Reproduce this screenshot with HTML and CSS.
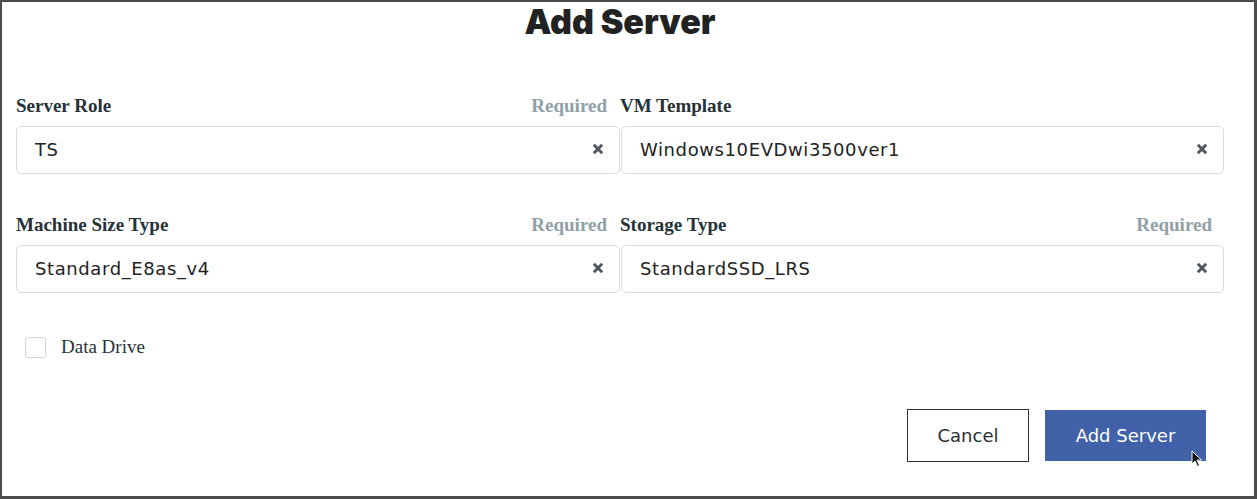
FILE: index.html
```html
<!DOCTYPE html>
<html>
<head>
<meta charset="utf-8">
<link rel="stylesheet" href="styles.css">
</head>
<body>
<div class="frame">
  <div class="form">
    <h1 class="title">Add Server</h1>
    <div class="grid">
      <div class="field">
        <div class="label-row"><span class="label">Server Role</span><span class="req">Required</span></div>
        <div class="select"><span class="value">TS</span><svg class="clear" width="12" height="12" viewBox="0 0 12 12"><path d="M1.8 1.8 L10.2 10.2 M10.2 1.8 L1.8 10.2" stroke="#50575c" stroke-width="2.9"/></svg></div>
      </div>
      <div class="field">
        <div class="label-row"><span class="label">VM Template</span></div>
        <div class="select"><span class="value">Windows10EVDwi3500ver1</span><svg class="clear" width="12" height="12" viewBox="0 0 12 12"><path d="M1.8 1.8 L10.2 10.2 M10.2 1.8 L1.8 10.2" stroke="#50575c" stroke-width="2.9"/></svg></div>
      </div>
      <div class="field">
        <div class="label-row"><span class="label">Machine Size Type</span><span class="req">Required</span></div>
        <div class="select"><span class="value">Standard_E8as_v4</span><svg class="clear" width="12" height="12" viewBox="0 0 12 12"><path d="M1.8 1.8 L10.2 10.2 M10.2 1.8 L1.8 10.2" stroke="#50575c" stroke-width="2.9"/></svg></div>
      </div>
      <div class="field">
        <div class="label-row"><span class="label">Storage Type</span><span class="req">Required</span></div>
        <div class="select"><span class="value">StandardSSD_LRS</span><svg class="clear" width="12" height="12" viewBox="0 0 12 12"><path d="M1.8 1.8 L10.2 10.2 M10.2 1.8 L1.8 10.2" stroke="#50575c" stroke-width="2.9"/></svg></div>
      </div>
    </div>
    <label class="check-row"><span class="checkbox"></span><span class="check-label">Data Drive</span></label>
    <div class="actions">
      <button class="btn btn-cancel">Cancel</button>
      <button class="btn btn-primary">Add Server
        <svg class="cursor" width="12" height="18" viewBox="0 0 12 18"><path d="M1 1 L1 14 L4 11 L6.5 16.5 L8.5 15.5 L6 10 L10.5 10 Z" fill="#111" stroke="#fff" stroke-width="1"/></svg>
      </button>
    </div>
  </div>
</div>
</body>
</html>
```
FILE: styles.css
```css
html, body {
  margin: 0;
  padding: 0;
  background: #fff;
}
.frame {
  box-sizing: border-box;
  width: 1257px;
  height: 499px;
  border-style: solid;
  border-color: #4b4b4b;
  border-width: 2px 3px 3px 2px;
  background: #fff;
  overflow: hidden;
}
.form {
  width: 1208px;
  margin-left: 14px;
}
.title {
  margin: 0;
  text-align: center;
  font-family: Inter, "Noto Sans", sans-serif;
  font-weight: 900;
  font-size: 34px;
  line-height: 40px;
  color: #222;
  letter-spacing: 0;
}
.grid {
  margin-top: 52px;
  display: grid;
  grid-template-columns: 604px 604px;
  row-gap: 39px;
}
.label-row {
  display: flex;
  justify-content: space-between;
  align-items: baseline;
  padding-right: 13px;
  height: 24px;
  line-height: 24px;
  margin-bottom: 8px;
  font-family: "Liberation Serif", serif;
  font-weight: bold;
  font-size: 19px;
}
.field:nth-child(2) .label-row,
.field:nth-child(4) .label-row {
  padding-right: 12px;
}
.label { color: #263238; }
.req { color: #8fa0a8; }
.select {
  box-sizing: border-box;
  height: 48px;
  border: 1px solid #dcdcdc;
  border-radius: 5px;
  display: flex;
  align-items: center;
  justify-content: space-between;
  padding: 0 15px 0 18px;
  font-family: "DejaVu Sans", sans-serif;
  font-size: 18px;
  letter-spacing: 0.6px;
  color: #222;
}
.field:nth-child(2) .select,
.field:nth-child(4) .select { margin-left: 1px; }
.value {
  margin-top: -1px;
}
.clear {
  flex: none;
  margin-top: -2px;
}
.check-row {
  display: flex;
  align-items: center;
  margin-top: 43px;
  padding-left: 9px;
  height: 22px;
}
.checkbox {
  box-sizing: border-box;
  width: 21px;
  height: 21px;
  border: 1px solid #d6d6d6;
  border-radius: 3px;
  margin-right: 15px;
}
.check-label {
  font-family: "Liberation Serif", serif;
  font-size: 19px;
  color: #263238;
}
.actions {
  display: flex;
  justify-content: flex-end;
  align-items: center;
  gap: 16px;
  margin-top: 51px;
  padding-right: 18px;
}
.btn {
  box-sizing: border-box;
  font-family: "DejaVu Sans", sans-serif;
  font-size: 18px;
  cursor: default;
  padding: 0;
}
.btn-cancel {
  width: 122px;
  height: 53px;
  background: #fff;
  border: 1px solid #2b2f33;
  color: #2b2f33;
}
.btn-primary {
  position: relative;
  width: 161px;
  height: 51px;
  background: #4161a8;
  border: none;
  color: #fff;
}
.cursor {
  position: absolute;
  left: 146px;
  top: 40px;
}
```
